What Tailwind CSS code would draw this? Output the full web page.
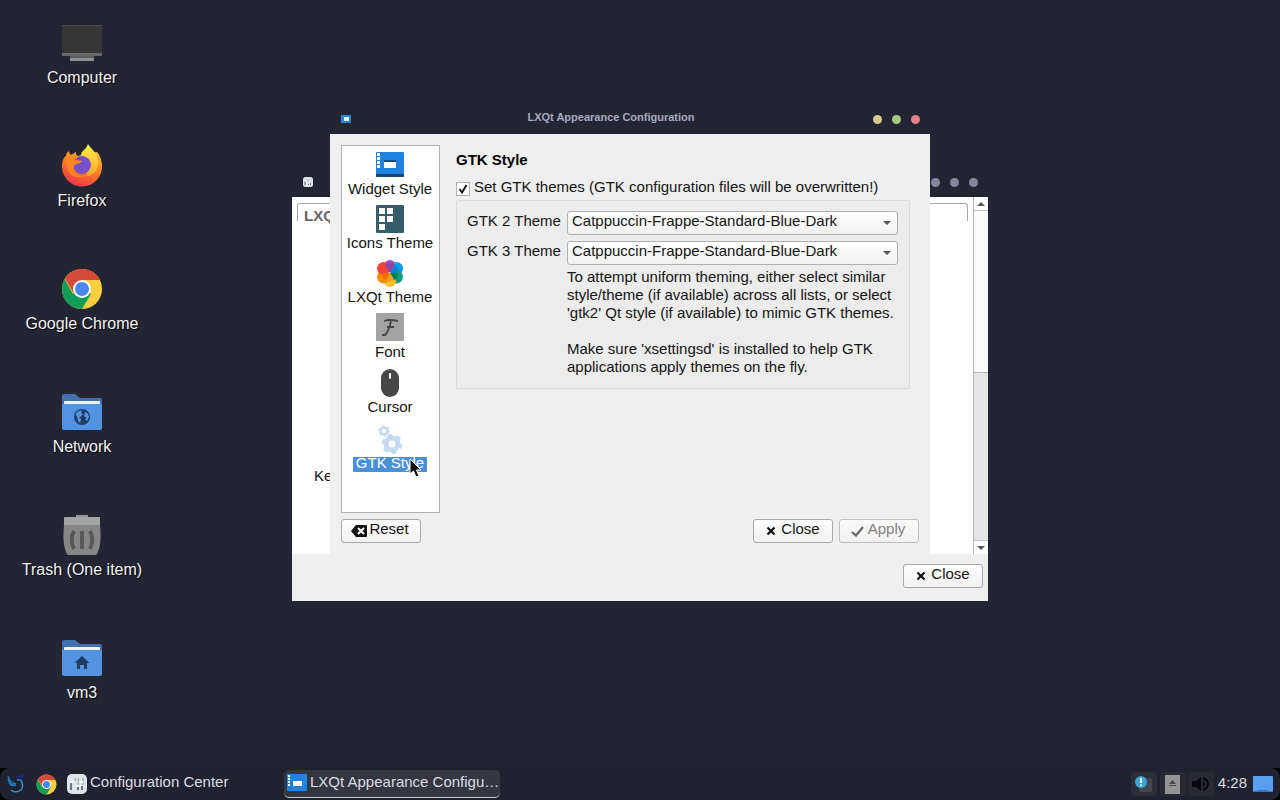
<!DOCTYPE html>
<html lang="en">
<head>
<meta charset="utf-8">
<title>LXQt Desktop</title>
<script src="https://cdn.jsdelivr.net/npm/@tailwindcss/browser@4"></script>
</head>
<body class="relative flex min-h-screen flex-col overflow-hidden bg-[#242533] font-['Liberation_Sans',Arial,sans-serif] text-[15px] leading-[18px] text-[#141414]">

<svg class="hidden" aria-hidden="true">
  <symbol id="chrome" viewBox="0 0 42 42">
    <circle cx="21" cy="21" r="20" fill="#ffcd40"/>
    <path d="M21 21 L12 26 L3.7 11 A20 20 0 0 0 21 41 L30 26 Z" fill="#0f9d58"/>
    <path d="M21 12 H38.9 A20 20 0 0 0 3.9 10.6 L12.5 25 L21 21Z" fill="#d64a3c"/>
    <circle cx="21" cy="21" r="9" fill="#fff"/>
    <circle cx="21" cy="21" r="7" fill="#4a86ee"/>
  </symbol>
  <symbol id="folder" viewBox="0 0 42 42">
    <path d="M1 5 a2 2 0 0 1 2-2 H14 l5 4 H39 a2 2 0 0 1 2 2 V20 H1Z" fill="#4470ac"/>
    <path d="M3 11 a1 1 0 0 1 1-1 H38 a1 1 0 0 1 1 1 V16 H3Z" fill="#e9f1fb"/>
    <path d="M1 13 H41 V37 a2 2 0 0 1-2 2 H3 a2 2 0 0 1-2-2Z" fill="#5294e2"/>
  </symbol>
  <symbol id="cross" viewBox="0 0 10 10">
    <path d="M1.5 1.5 L8.5 8.5 M8.5 1.5 L1.5 8.5" stroke="#111" stroke-width="2.2"/>
  </symbol>
  <symbol id="widget" viewBox="0 0 28 28">
    <rect width="28" height="25" rx="1" fill="#1f83e0"/>
    <path d="M0 22H28V24a1 1 0 0 1-1 1H1a1 1 0 0 1-1-1Z" fill="#1c4468"/>
    <path d="M1 1h3v3H1zM1 5h3v3H1zM1 9h3v3H1zM1 13h3v3H1z" fill="#fff"/>
    <rect x="8" y="8" width="12" height="3" fill="#174a7c"/>
    <rect x="8" y="10" width="12" height="6" fill="#fff"/>
  </symbol>
  <symbol id="sliders" viewBox="0 0 20 20">
    <rect width="20" height="20" rx="5" fill="#dfe4ea"/>
    <path d="M4 8v8M8.500 4v3M11.500 4v8M16 4v7" stroke="#aab2bd" stroke-width="1.500"/>
    <path d="M4 9v7M11 13v3M15 12v4" stroke="#6a7480" stroke-width="2"/>
    <path d="M2.500 8h4M9 12h5M12 8h4" stroke="#fff" stroke-width="2"/>
  </symbol>
</svg>

<main class="flex-1">
  <nav class="flex w-[164px] flex-col text-[16px] text-[#f4f4f6] [text-shadow:1px_1px_1px_#000]" aria-label="Desktop">
    <a href="#" class="flex h-[123px] flex-col items-center gap-[5px] pt-[22px]">
      <svg class="size-[42px]" viewBox="0 0 42 42"><rect x="1" y="3" width="40" height="31" rx="1" fill="#353635"/><rect x="1" y="3" width="40" height="1" fill="#4c4d4c"/><path d="M1 31H41V33a1 1 0 0 1-1 1H2a1 1 0 0 1-1-1Z" fill="#666768"/><rect x="9" y="35" width="24" height="4" fill="#8e8f90"/><rect x="9" y="34" width="24" height="2" fill="#5b5c5d"/></svg>
      <span>Computer</span>
    </a>
    <a href="#" class="flex h-[123px] flex-col items-center gap-[5px] pt-[22px]">
      <svg class="size-[42px] overflow-visible" viewBox="0 0 42 42">
        <defs><linearGradient id="fx" x1="0.8" y1="0" x2="0.3" y2="1"><stop offset="0" stop-color="#ffbd2e"/><stop offset=".5" stop-color="#ff7a22"/><stop offset="1" stop-color="#e8344f"/></linearGradient>
        <linearGradient id="fy" x1="0" y1="0" x2="0" y2="1"><stop offset="0" stop-color="#fff04a"/><stop offset="1" stop-color="#ffa62b"/></linearGradient></defs>
        <path d="M8 6 C8 8 9 9 10 10 C12 9 13 8 15 7 C15 9 15 10 17 11 L27 8 L36 7 C39 10 41 16 41 21 A20 20 0 0 1 1 22 C1 17 2 13 5 11 C5 9 6 7 8 6Z" fill="url(#fx)"/>
        <path d="M27 -1 C29 3 36 7 37 15 C38 24 34 30 26 31 L22 14 C20 11 19 9 22 6 C24 4 26 2 27 -1Z" fill="url(#fy)"/>
        <circle cx="21" cy="20" r="9" fill="#7650ca"/>
        <path d="M5 14 C9 12 13 13 15 15 L21 16 C20 18 17 19 15 19 C12 21 12 25 15 28 C19 31 25 31 29 28 C24 34 12 34 8 27 C6 23 5 18 5 14Z" fill="#ff8524"/>
      </svg>
      <span>Firefox</span>
    </a>
    <a href="#" class="flex h-[123px] flex-col items-center gap-[5px] pt-[22px]">
      <svg class="size-[42px]"><use href="#chrome"/></svg>
      <span>Google Chrome</span>
    </a>
    <a href="#" class="flex h-[123px] flex-col items-center gap-[5px] pt-[22px]">
      <svg class="size-[42px]" viewBox="0 0 42 42"><use href="#folder"/><circle cx="21" cy="26" r="8" fill="#1f3c63"/><path d="M14.500 23 C16 20 19 19 21 19.500 L20 22 L22 23 L20 25.500 L18 26 L20 28 L19 32 L17 30 L16.500 27Z M24 21 L27 22.500 L28 26 L26 30 L24.500 29 L25 26.500 L23 25Z" fill="#5294e2"/></svg>
      <span>Network</span>
    </a>
    <a href="#" class="flex h-[123px] flex-col items-center gap-[5px] pt-[22px]">
      <svg class="size-[42px]" viewBox="0 0 42 42"><path d="M15 1H27V5H15Z" fill="#979797"/><path d="M3 11 H39 C40 22 40 32 36 40 a2 2 0 0 1-2 1 H8 a2 2 0 0 1-2-1 C2 32 2 22 3 11Z" fill="#868686"/><path d="M4 3H38a1 1 0 0 1 1 1V11H3V4a1 1 0 0 1 1-1Z" fill="#a4a4a4"/><path d="M13 17C10 22 10 30 13 35M29 17C32 22 32 30 29 35M21 17V35" fill="none" stroke="#585858" stroke-width="4"/></svg>
      <span>Trash (One item)</span>
    </a>
    <a href="#" class="flex h-[123px] flex-col items-center gap-[5px] pt-[22px]">
      <svg class="size-[42px]" viewBox="0 0 42 42"><use href="#folder"/><path d="M21 19 L28.500 26 H26 V32 H23 V28 H19 V32 H16 V26 H13.500Z" fill="#1f3c63"/></svg>
      <span>vm3</span>
    </a>
  </nav>

  <!-- Configuration Center window -->
  <section class="absolute left-[292px] top-[167px] w-[696px]" aria-label="Configuration Center">
    <header class="flex h-[30px] items-center justify-between pl-[11px] pr-[10px]">
      <svg class="size-[10px]" viewBox="0 0 20 20"><use href="#sliders"/></svg>
      <div class="flex gap-[10px]"><button class="size-[9px] rounded-full bg-[#85879c]" aria-label="Minimize"></button><button class="size-[9px] rounded-full bg-[#85879c]" aria-label="Maximize"></button><button class="size-[9px] rounded-full bg-[#85879c]" aria-label="Close window"></button></div>
    </header>
    <div class="bg-[#efefef] pb-[13px]">
      <div class="flex h-[357px] bg-white">
        <div class="flex flex-1 flex-col px-[5px] pt-[6px]">
          <div class="h-[18px] rounded-t-[3px] border-x border-t border-[#a8a8a8] pl-[6px] pt-[3px] font-bold text-[#666]">LXQ</div>
          <div class="mt-[246px] pl-[17px]">Ke</div>
        </div>
        <div class="flex w-[15px] flex-col border-l border-[#b4b4b4] bg-[#e6e6e6]">
          <div class="flex h-[14px] items-center justify-center border-b border-[#c4c4c4] bg-white"><svg class="h-1 w-2" viewBox="0 0 8 4"><path d="M4 0L8 4H0Z" fill="#555"/></svg></div>
          <div class="h-[162px] border-b border-[#b4b4b4] bg-[#fafafa]"></div>
          <div class="flex-1"></div>
          <div class="flex h-[14px] items-center justify-center border-t border-[#c4c4c4] bg-white"><svg class="h-1 w-2" viewBox="0 0 8 4"><path d="M0 0H8L4 4Z" fill="#555"/></svg></div>
        </div>
      </div>
      <div class="flex justify-end pr-[5px] pt-[10px]">
        <button class="flex h-6 w-20 items-center justify-center gap-[5px] rounded-[3px] border border-[#a9a9a9] bg-linear-to-b from-white to-[#f1f1f1] pb-1"><svg class="mt-1 size-[10px]"><use href="#cross"/></svg>Close</button>
      </div>
    </div>
  </section>

  <!-- Appearance dialog -->
  <section class="absolute left-[330px] top-[104px] w-[600px]" aria-label="LXQt Appearance Configuration">
    <header class="flex h-[30px] items-center bg-[#242533] pl-[11px] pr-[10px]">
      <div class="flex w-12"><svg class="h-[8px] w-[10px]" viewBox="0 0 10 8"><rect width="10" height="8" fill="#2786cf"/><rect x="3" y="2" width="5" height="4" fill="#e8f4ff"/></svg></div>
      <h1 class="flex-1 pb-1 pr-10 text-center text-[11px] leading-3 font-bold text-[#a7aac0]">LXQt Appearance Configuration</h1>
      <div class="flex gap-[10px]"><button class="size-[9px] rounded-full bg-[#d9cb94]" aria-label="Minimize"></button><button class="size-[9px] rounded-full bg-[#a9c988]" aria-label="Maximize"></button><button class="size-[9px] rounded-full bg-[#e38089]" aria-label="Close window"></button></div>
    </header>
    <div class="bg-[#efefef] px-[11px] pb-[11px] pt-[11px]">
      <div class="flex gap-4">
        <ul class="flex h-[368px] w-[99px] flex-col gap-2 border border-[#b2b2b2] bg-white pt-[6px] pr-[1px] text-center">
          <li class="flex flex-col items-center"><svg class="size-7"><use href="#widget"/></svg><span>Widget Style</span></li>
          <li class="flex flex-col items-center"><svg class="size-7 overflow-visible" viewBox="0 0 28 28"><rect y="-1" width="28" height="28" rx="1" fill="#345c6c"/><path d="M3 2h6v6H3zM11 2h6v6h-6zM3 10h6v6H3zM11 10h6v6h-6zM3 18h6v6H3z" fill="#fff"/></svg><span>Icons Theme</span></li>
          <li class="flex flex-col items-center"><svg class="size-7" viewBox="0 1 28 28"><circle cx="14" cy="7" r="6" fill="#ab47bc"/><circle cx="20.500" cy="9.500" r="6.500" fill="#039be5"/><circle cx="20.500" cy="18" r="6.500" fill="#159a85"/><circle cx="14" cy="22" r="6" fill="#fbc02d"/><circle cx="7.500" cy="18" r="6.500" fill="#fb8c00"/><circle cx="7.500" cy="9.500" r="6.500" fill="#f44336"/><path d="M14 14L9 6Q14 2 19 6Z" fill="#8e44ad"/><path d="M14 14L19 6Q23 9 22 14Z" fill="#0d83c9"/><path d="M14 14H22Q22 20 18 21Z" fill="#0c7d50"/><path d="M14 14L18 21Q14 24 10 21Z" fill="#eda51d"/><path d="M14 14L10 21Q5 19 6 14Z" fill="#ef6c00"/></svg><span>LXQt Theme</span></li>
          <li class="flex flex-col items-center pt-[1px]"><svg class="size-7 overflow-visible" viewBox="0 0 28 28"><rect y="-2" width="28" height="28" fill="#a3a3a3"/><path d="M8 6Q13 4 22 6M15 6Q13 16 9 20H6M11 12H18" fill="none" stroke="#454545" stroke-width="1.800"/></svg><span>Font</span></li>
          <li class="flex flex-col items-center pt-[1px]"><svg class="size-7 overflow-visible" viewBox="0 0 28 28"><rect x="5" y="-1" width="18" height="28" rx="9" fill="#474747"/><rect x="13" y="3" width="2" height="6" rx="1" fill="#fff"/></svg><span>Cursor</span></li>
          <li class="flex flex-col items-center pt-[2px]"><svg class="size-7 overflow-visible" viewBox="0 0 28 28"><g fill="none" stroke="#c5d9f3"><circle cx="16" cy="18" r="6" stroke-width="5"/><circle cx="16" cy="18" r="9" stroke-width="2.500" stroke-dasharray="4.700 4.700"/><circle cx="8" cy="5" r="3.500" stroke-width="2.500"/><circle cx="8" cy="5" r="5" stroke-width="1.500" stroke-dasharray="2.600 2.600"/></g></svg><span class="bg-linear-to-b from-transparent from-[3px] to-[#4a90d9] to-[3px] px-[3px] text-white">GTK Style</span></li>
        </ul>
        <div class="flex-1 pr-[9px] pt-[6px]">
          <h2 class="font-bold text-black">GTK Style</h2>
          <label class="mt-[9px] flex items-center gap-1 whitespace-nowrap">
            <span class="grid size-[14px] translate-y-[2px] place-items-center">
              <input type="checkbox" checked class="peer col-start-1 row-start-1 size-[14px] appearance-none border border-[#b0b0b0] bg-white">
              <svg class="pointer-events-none col-start-1 row-start-1 hidden size-[10px] peer-checked:block" viewBox="0 0 10 10"><path d="M1.500 5L4 8.500L8.500 1" fill="none" stroke="#111" stroke-width="1.900"/></svg>
            </span>
            <span>Set GTK themes (GTK configuration files will be overwritten!)</span>
          </label>
          <div class="mt-1 grid h-[189px] grid-cols-[100px_1fr] content-start items-start rounded-[2px] border border-[#dadada] bg-[#ececec] pl-[10px] pr-[11px] pt-[10px]">
            <label for="gtk2" class="pt-[1px]">GTK 2 Theme</label>
            <div class="relative h-[30px]"><select id="gtk2" class="h-6 w-full appearance-none rounded-[3px] border border-[#b0b0b0] bg-linear-to-b from-white to-[#f1f1f1] pb-1 pl-1 leading-[18px]"><option>Catppuccin-Frappe-Standard-Blue-Dark</option></select><svg class="pointer-events-none absolute right-[7px] top-[10px] h-1 w-2" viewBox="0 0 8 4"><path d="M0 0H8L4 4Z" fill="#555"/></svg></div>
            <label for="gtk3" class="pt-[1px]">GTK 3 Theme</label>
            <div class="relative h-[27px]"><select id="gtk3" class="h-6 w-full appearance-none rounded-[3px] border border-[#b0b0b0] bg-linear-to-b from-white to-[#f1f1f1] pb-1 pl-1 leading-[18px]"><option>Catppuccin-Frappe-Standard-Blue-Dark</option></select><svg class="pointer-events-none absolute right-[7px] top-[10px] h-1 w-2" viewBox="0 0 8 4"><path d="M0 0H8L4 4Z" fill="#555"/></svg></div>
            <div class="col-start-2"><p>To attempt uniform theming, either select similar style/theme (if available) across all lists, or select 'gtk2' Qt style (if available) to mimic GTK themes.</p><p class="mt-[18px]">Make sure 'xsettingsd' is installed to help GTK applications apply themes on the fly.</p></div>
          </div>
        </div>
      </div>
      <div class="mt-[6px] flex gap-[6px]">
        <button class="mr-auto flex h-6 w-20 items-center justify-center gap-[2px] rounded-[3px] border border-[#a9a9a9] bg-linear-to-b from-white to-[#f1f1f1] pr-[2px] pb-1"><svg class="mt-1 h-3 w-4" viewBox="0 0 16 12"><path d="M0 6L5 0H15a1 1 0 0 1 1 1V11a1 1 0 0 1-1 1H5Z" fill="#111"/><path d="M7 3L13 9M13 3L7 9" stroke="#fff" stroke-width="2"/></svg>Reset</button>
        <button class="flex h-6 w-20 items-center justify-center gap-[5px] rounded-[3px] border border-[#a9a9a9] bg-linear-to-b from-white to-[#f1f1f1] pb-1"><svg class="mt-1 size-[10px]"><use href="#cross"/></svg>Close</button>
        <button disabled class="flex h-6 w-20 items-center justify-center gap-1 rounded-[3px] border border-[#c0c0c0] bg-linear-to-b from-[#fafafa] to-[#f1f1f1] pr-[2px] pb-1 text-[#828282]"><svg class="mt-1 h-[11px] w-[13px]" viewBox="0 0 13 11"><path d="M1 6L5 9.500L12 1" fill="none" stroke="#666" stroke-width="2.200"/></svg>Apply</button>
      </div>
    </div>
  </section>

  <svg class="pointer-events-none absolute left-[409px] top-[458px] h-5 w-[13px]" viewBox="0 0 13 20"><path d="M1 1V16L4.500 13L7 19L10 18L7.500 12H12Z" fill="#111" stroke="#fff" stroke-width="1"/></svg>
</main>

<footer class="h-8 bg-black">
  <div class="flex h-8 items-center rounded-[10px] bg-[#21222f] pl-[6px] pr-[7px] text-[#dcdde3]">
    <button class="mr-[10px]" aria-label="Application menu"><svg class="size-5" viewBox="0 0 20 20"><path d="M2 2Q4 9 10 10M2 5Q4 12 10 11M3 9Q6 13 10 11" fill="none" stroke="#1b7fc0" stroke-width="1.300"/><path d="M11 6Q16 5 16 9Q18 15 13 17Q8 19 5 16" fill="none" stroke="#2aa2dc" stroke-width="1.300"/><path d="M10 2L14 3L17 1L16 5" fill="none" stroke="#1b2a9c" stroke-width="1.200"/></svg></button>
    <button class="mr-[10px]" aria-label="Google Chrome"><svg class="size-[21px]" viewBox="0 0 42 42"><use href="#chrome"/></svg></button>
    <button class="mr-[5px] flex w-[212px] items-center gap-[3px]"><svg class="size-5"><use href="#sliders"/></svg><span class="pb-1">Configuration Center</span></button>
    <button class="flex h-7 w-[216px] items-center gap-[3px] rounded-[5px] border-b border-[#c8ccd2] bg-[#343640] pl-[3px] text-left"><svg class="h-5 w-5 shrink-0" viewBox="0 0 20 20"><rect width="20" height="17" fill="#1f83e0"/><path d="M1 1h2v2H1zM1 4h2v2H1zM1 7h2v2H1zM1 10h2v2H1z" fill="#fff"/><rect x="6" y="7" width="9" height="5" fill="#fff"/></svg><span class="pb-[3px] whitespace-nowrap">LXQt Appearance Configu…</span></button>
    <div class="ml-auto flex items-center">
      <button class="flex h-6 w-[26px] items-center justify-center rounded bg-[#2b2d38]" aria-label="Notifications"><svg class="size-5" viewBox="0 0 20 20"><rect x="5" y="4" width="13" height="14" rx="2" fill="#44464d"/><circle cx="7" cy="8" r="6" fill="#3da5dc"/><path d="M7 4V9M7 10.500V12" stroke="#eaf6ff" stroke-width="2"/></svg></button>
      <button class="ml-[3px] flex h-6 w-[26px] items-center justify-center rounded bg-[#292a34]" aria-label="Removable media"><svg class="h-[19px] w-[15px]" viewBox="0 0 15 19"><rect width="15" height="19" fill="#949494"/><path d="M7.500 5L11 9H4ZM4 10H11V11H4Z" fill="#484848"/></svg></button>
      <button class="ml-[2px] flex h-6 w-[26px] items-center justify-center rounded bg-[#292a34]" aria-label="Volume"><svg class="h-4 w-[17px]" viewBox="0 0 17 16"><path d="M0 5H4L9 1V15L4 11H0Z" fill="#08080a"/><path d="M11 2Q16 4 16 8T11 14" fill="none" stroke="#08080a" stroke-width="2"/><path d="M11 5Q13 6 13 8T11 11" fill="#08080a"/></svg></button>
      <time class="ml-1 pb-[3px]">4:28</time>
      <button class="ml-[6px]" aria-label="Show desktop"><svg class="h-[17px] w-5" viewBox="0 0 20 17"><path d="M1 0H19a1 1 0 0 1 1 1V15H15L14 14H6L5 15H0V1a1 1 0 0 1 1-1Z" fill="#56a0ee"/><path d="M0 15H4L5 14H15L16 15H20V16H0Z" fill="#3775bd"/></svg></button>
    </div>
  </div>
</footer>
</body>
</html>
